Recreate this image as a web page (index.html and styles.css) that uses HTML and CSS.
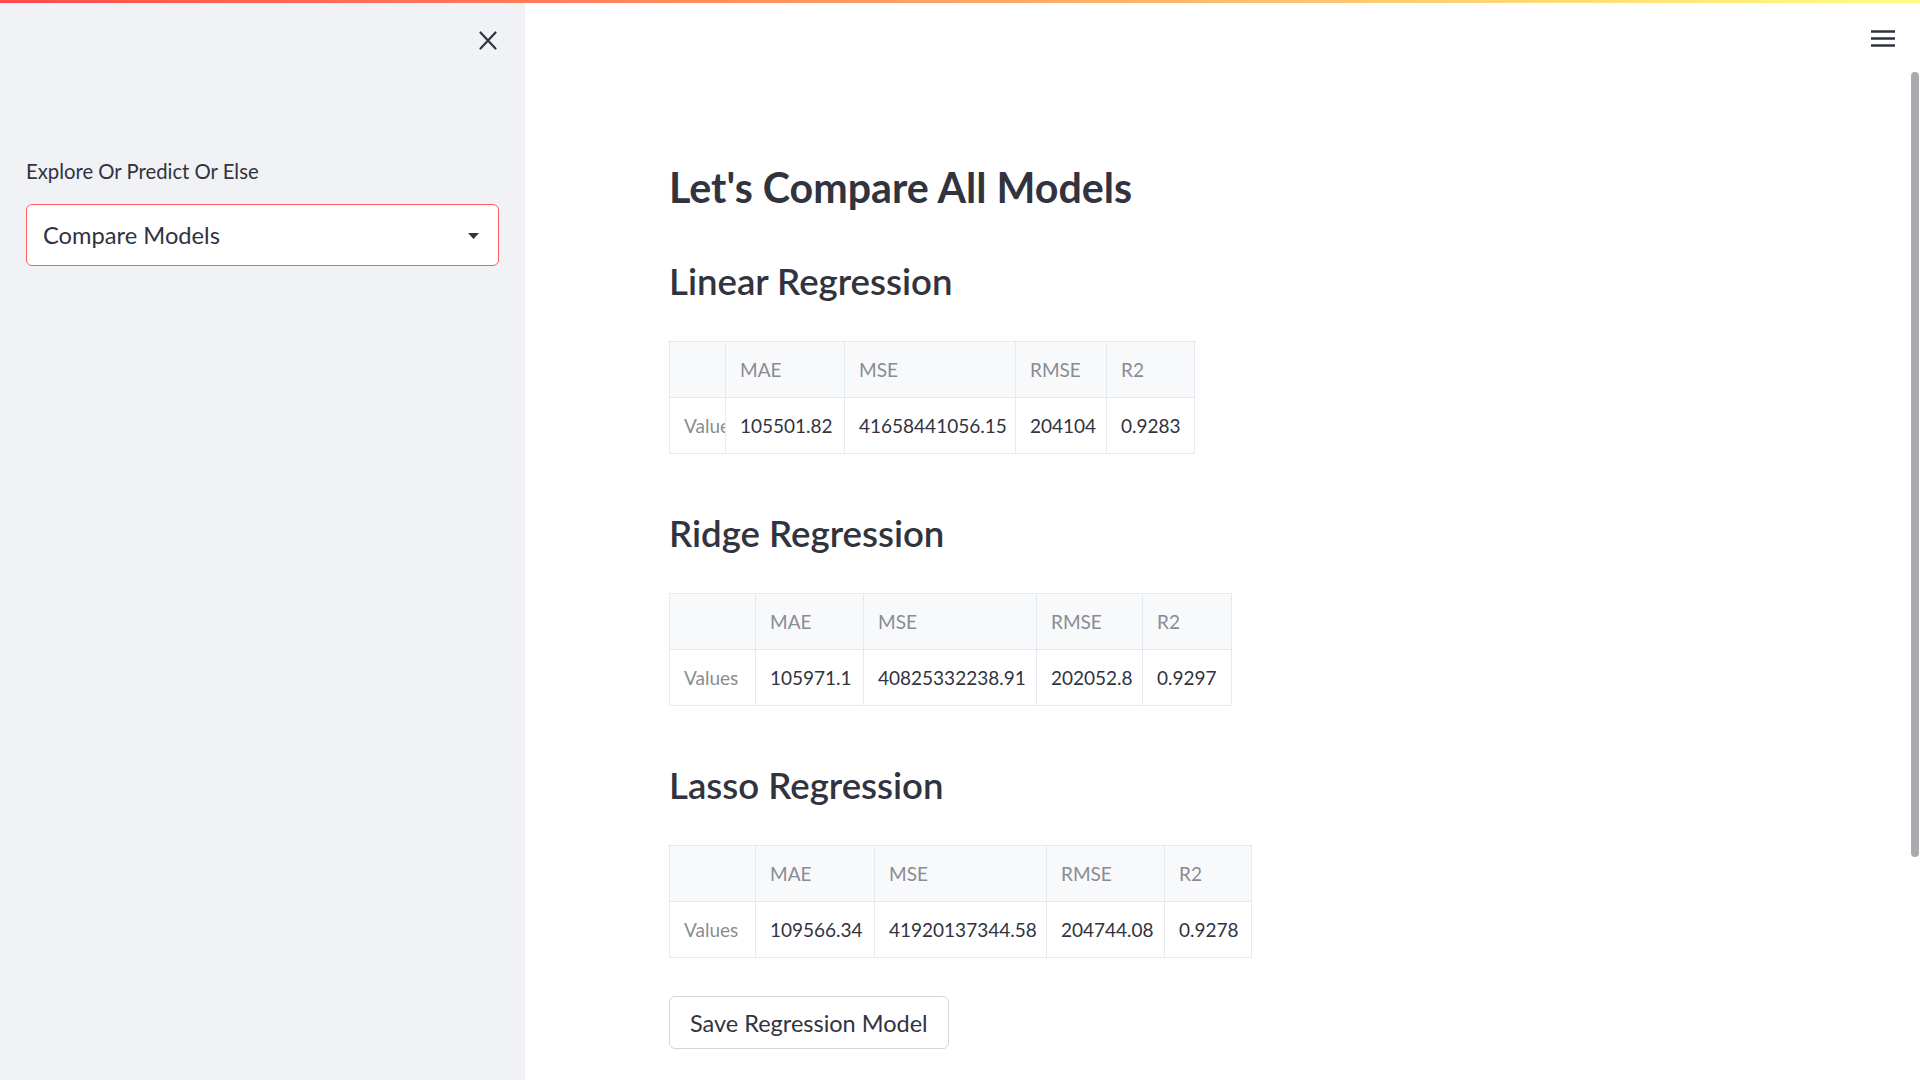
FILE: index.html
```html
<!DOCTYPE html>
<html lang="en">
<head>
<meta charset="utf-8">
<title>Compare Models</title>
<link rel="stylesheet" href="styles.css">
</head>
<body>
<div class="decoration"></div>
<aside class="sidebar">
  <div class="sidebar-top">
    <button class="close-btn" aria-label="Close sidebar">
      <svg width="18" height="19" viewBox="0 0 18 19"><path d="M1.5 1.5 L16.5 17.5 M16.5 1.5 L1.5 17.5" stroke="#31333f" stroke-width="2.2" stroke-linecap="round" fill="none"/></svg>
    </button>
  </div>
  <label class="select-label">Explore Or Predict Or Else</label>
  <div class="select-box">
    <span class="select-value">Compare Models</span>
    <svg class="select-arrow" width="11" height="6" viewBox="0 0 11 6"><path d="M0 0 H11 L5.5 6 Z" fill="#31333f"/></svg>
  </div>
</aside>
<main class="main">
  <h1 class="title">Let's Compare All Models</h1>

  <h2 class="subtitle">Linear Regression</h2>
  <table class="df" style="width:526px">
    <colgroup><col style="width:56px"><col style="width:119px"><col style="width:171px"><col style="width:91px"><col style="width:88px"></colgroup>
    <thead><tr><th></th><th>MAE</th><th>MSE</th><th>RMSE</th><th>R2</th></tr></thead>
    <tbody><tr><th class="idx">Values</th><td>105501.82</td><td>41658441056.15</td><td>204104</td><td>0.9283</td></tr></tbody>
  </table>

  <h2 class="subtitle">Ridge Regression</h2>
  <table class="df" style="width:563px">
    <colgroup><col style="width:86px"><col style="width:108px"><col style="width:173px"><col style="width:106px"><col style="width:89px"></colgroup>
    <thead><tr><th></th><th>MAE</th><th>MSE</th><th>RMSE</th><th>R2</th></tr></thead>
    <tbody><tr><th class="idx">Values</th><td>105971.1</td><td>40825332238.91</td><td>202052.8</td><td>0.9297</td></tr></tbody>
  </table>

  <h2 class="subtitle">Lasso Regression</h2>
  <table class="df" style="width:583px">
    <colgroup><col style="width:86px"><col style="width:119px"><col style="width:172px"><col style="width:118px"><col style="width:87px"></colgroup>
    <thead><tr><th></th><th>MAE</th><th>MSE</th><th>RMSE</th><th>R2</th></tr></thead>
    <tbody><tr><th class="idx">Values</th><td>109566.34</td><td>41920137344.58</td><td>204744.08</td><td>0.9278</td></tr></tbody>
  </table>

  <button class="save-btn">Save Regression Model</button>
</main>
<div class="menu-btn" aria-label="Menu">
  <svg width="24" height="17" viewBox="0 0 24 17"><path d="M0 1.5 H24 M0 8.5 H24 M0 15.5 H24" stroke="#31333f" stroke-width="2.4" fill="none"/></svg>
</div>
<div class="scroll-thumb"></div>
</body>
</html>
```
FILE: styles.css
```css
html, body {
  margin: 0;
  padding: 0;
  height: 100%;
  overflow: hidden;
}
body {
  display: flex;
  font-family: Lato, "Noto Sans", sans-serif;
  color: #31333f;
  background: #ffffff;
}
.decoration {
  position: fixed;
  top: 0;
  left: 0;
  right: 0;
  height: 3px;
  background: linear-gradient(90deg, #ff4b4b, #fffd80);
  z-index: 10;
}
.sidebar {
  width: 525px;
  flex: 0 0 525px;
  height: 100vh;
  background: #f0f2f6;
  box-sizing: border-box;
  padding: 31px 26px 0 26px;
  display: flex;
  flex-direction: column;
}
.sidebar-top {
  display: flex;
  justify-content: flex-end;
  padding-right: 2px;
  height: 19px;
  margin-bottom: 109px;
}
.close-btn {
  border: none;
  background: none;
  padding: 0;
  width: 18px;
  height: 19px;
  display: block;
}
.close-btn svg { display: block; }
.select-label {
  font-size: 20.3px;
  line-height: 24px;
  height: 24px;
  margin-bottom: 21px;
  color: #31333f;
}
.select-box {
  box-sizing: border-box;
  height: 62px;
  border: 1px solid #ff5c5c;
  border-radius: 6px;
  background: #ffffff;
  display: flex;
  align-items: center;
  justify-content: space-between;
  padding: 0 19px 0 16px;
}
.select-value {
  font-size: 23.7px;
  line-height: 30px;
}
.select-arrow { display: block; margin-top: 2px; }
.main {
  flex: 1;
  padding: 162px 0 0 144px;
  display: flex;
  flex-direction: column;
  align-items: flex-start;
}
.title {
  margin: 0;
  font-size: 41.2px;
  line-height: 50px;
  font-weight: 700;
  color: #31333f;
}
.subtitle {
  margin: 47px 0 38px 0;
  font-size: 36.6px;
  line-height: 44px;
  font-weight: 600;
  color: #31333f;
}
.df + .subtitle { margin-top: 57px; }
.df {
  border-collapse: collapse;
  table-layout: fixed;
  font-size: 19px;
  border: 1px solid #e6e9ef;
}
.df th, .df td {
  border: 1px solid #e6e9ef;
  height: 56px;
  padding: 0 14px;
  text-align: left;
  white-space: nowrap;
  overflow: hidden;
  text-overflow: clip;
  font-weight: 400;
  box-sizing: border-box;
}
.df thead th {
  background: #f8f9fb;
  color: #8a8c93;
}
.df .idx { color: #8a8c93; }
.df td { color: #31333f; }
.save-btn {
  margin-top: 38px;
  height: 53px;
  padding: 0 20px;
  border: 1px solid #d6d6d9;
  border-radius: 6px;
  background: #ffffff;
  font-family: Lato, "Noto Sans", sans-serif;
  font-size: 23.5px;
  color: #31333f;
}
.menu-btn {
  position: fixed;
  top: 30px;
  right: 25px;
  width: 24px;
  height: 17px;
}
.menu-btn svg { display: block; }
.scroll-thumb {
  position: fixed;
  top: 72px;
  right: 1px;
  width: 8px;
  height: 785px;
  border-radius: 4px;
  background: #a9a9ae;
}
```
